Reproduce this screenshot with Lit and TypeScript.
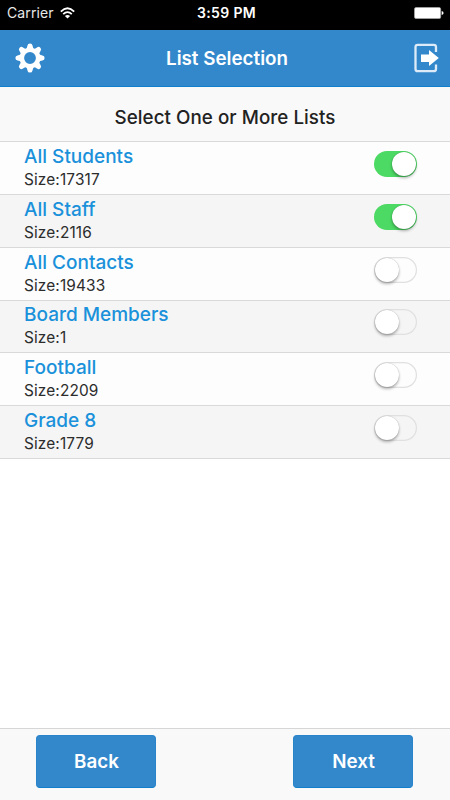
import { LitElement, html, css, svg } from "lit";
import { customElement, property, state } from "lit/decorators.js";
import { classMap } from "lit/directives/class-map.js";

interface Group {
  name: string;
  size: number;
  on: boolean;
}

@customElement("toggle-switch")
class ToggleSwitch extends LitElement {
  @property({ type: Boolean }) on = false;

  static styles = css`
    :host {
      display: block;
    }
    .track {
      box-sizing: border-box;
      display: flex;
      width: 43px;
      height: 26px;
      padding: 1px;
      border-radius: 13px;
      box-shadow: inset 0 0 0 1.2px #e0e0e0;
    }
    .track.on {
      justify-content: flex-end;
      background: #4cd964;
      box-shadow: none;
    }
    .knob {
      width: 24px;
      height: 24px;
      border-radius: 50%;
      background: #fff;
      box-shadow: 0 2px 3px rgba(0, 0, 0, 0.3), 0 0 1px rgba(0, 0, 0, 0.3);
    }
  `;

  render() {
    return html`<div class=${classMap({ track: true, on: this.on })}>
      <div class="knob"></div>
    </div>`;
  }
}

@customElement("app-root")
class AppRoot extends LitElement {
  @state() private groups: Group[] = [
    { name: "All Students", size: 17317, on: true },
    { name: "All Staff", size: 2116, on: true },
    { name: "All Contacts", size: 19433, on: false },
    { name: "Board Members", size: 1, on: false },
    { name: "Football", size: 2209, on: false },
    { name: "Grade 8", size: 1779, on: false },
  ];

  static styles = css`
    :host {
      display: flex;
      flex-direction: column;
      height: 800px;
      width: 450px;
      overflow: hidden;
      background: #fff;
      color: #222;
      font-family: Inter, "Liberation Sans", sans-serif;
    }
    svg {
      display: block;
    }
    .status {
      display: grid;
      grid-template-columns: 1fr auto 1fr;
      align-items: center;
      flex: none;
      height: 30px;
      box-sizing: border-box;
      padding: 0 6px 5px 7px;
      background: #000;
      color: #fff;
      font-size: 14px;
    }
    .carrier {
      display: flex;
      align-items: center;
      gap: 6px;
      color: #e8e8e8;
      letter-spacing: 0.1px;
    }
    .time {
      padding-left: 2px;
      font-weight: 600;
      letter-spacing: 0.35px;
    }
    .battery {
      justify-self: end;
    }
    .nav {
      display: grid;
      grid-template-columns: 1fr auto 1fr;
      align-items: center;
      flex: none;
      height: 57px;
      box-sizing: border-box;
      padding: 0 11px 0 15px;
      background: #3388cc;
      border-bottom: 1px solid #1180cc;
      color: #fff;
    }
    .logout {
      justify-self: end;
    }
    .title {
      font-size: 18.8px;
      font-weight: 600;
    }
    .heading {
      display: flex;
      align-items: center;
      justify-content: center;
      flex: none;
      box-sizing: border-box;
      height: 55.3px;
      padding-top: 6px;
      background: #f9f9f9;
      border-bottom: 1px solid #d9d9d9;
      font-size: 18.8px;
      font-weight: 500;
      letter-spacing: 0.05px;
    }
    .row {
      display: flex;
      justify-content: space-between;
      box-sizing: border-box;
      height: 52.8px;
      padding: 2.7px 33px 0 24px;
      border-bottom: 1px solid #d9d9d9;
      background: #fdfdfd;
    }
    .row:nth-child(even) {
      background: #f5f5f5;
    }
    .name {
      font-size: 19px;
      font-weight: 540;
      line-height: 23px;
      color: #1a91da;
    }
    .size {
      font-size: 15.4px;
      line-height: 23.2px;
      letter-spacing: 0.13px;
      color: #2c2c2c;
    }
    .switch {
      padding-top: 6px;
    }
    .footer {
      display: flex;
      justify-content: space-between;
      box-sizing: border-box;
      flex: none;
      height: 72px;
      margin-top: auto;
      padding: 6px 37px 0 36px;
      background: #f9f9f9;
      border-top: 1px solid #d6d6d6;
    }
    .button {
      box-sizing: border-box;
      width: 120px;
      height: 53px;
      padding: 0 0 0 1px;
      border: 1px solid #2a84ca;
      border-bottom-color: #1180cc;
      border-radius: 4px;
      background: #3388cc;
      color: #fff;
      font: 600 18.8px Inter, "Liberation Sans", sans-serif;
    }
  `;

  private gear() {
    const teeth = [0, 45, 90, 135, 180, 225, 270, 315];
    return html`<svg width="30" height="30" viewBox="-15 -15 30 30" fill="#fff">
      <circle r="8" fill="none" stroke="#fff" stroke-width="4.2" />
      ${teeth.map(
        (a) => svg`<path transform="rotate(${a})"
          d="M-4.4 -8.8 Q-2.8 -9.8 -2.5 -12.4 Q-2.2 -14.6 0 -14.6 Q2.2 -14.6 2.5 -12.4 Q2.8 -9.8 4.4 -8.8 Z" />`
      )}
    </svg>`;
  }

  render() {
    return html`
      <div class="status">
        <div class="carrier">
          <span>Carrier</span>
          <svg width="15" height="12" viewBox="0 0 15 12" fill="none" stroke="#fff" stroke-width="1.8">
            <path d="M0.8 4.6 Q7.5 -2 14.2 4.6" />
            <path d="M3.2 7.2 Q7.5 3 11.8 7.2" />
            <path d="M7.5 11.6 L4.9 9 Q7.5 6.8 10.1 9 Z" fill="#fff" stroke="none" />
          </svg>
        </div>
        <div class="time">3:59 PM</div>
        <svg class="battery" width="30" height="12" viewBox="0 0 30 12" fill="#fff">
          <rect x="0.5" y="0.5" width="26.2" height="11" rx="1.5" stroke="#aaa" stroke-width="0.7" />
          <path d="M27.7 4 Q29.6 4.4 29.6 6 T27.7 8 Z" />
        </svg>
      </div>
      <div class="nav">
        ${this.gear()}
        <div class="title">List Selection</div>
        <svg class="logout" width="25" height="30" viewBox="0 0 25 30">
          <path
            d="M22 9 V4 Q22 1.8 19.8 1.8 H3.7 Q1.5 1.8 1.5 4 V26 Q1.5 28.2 3.7 28.2 H19.8 Q22 28.2 22 26 V21.5"
            fill="none" stroke="#dcebf7" stroke-width="2.3" />
          <path d="M7 11.5 H15 V7 L24.8 15.1 L15 23 V19 H7 Z" fill="#fff" />
        </svg>
      </div>
      <div class="heading">Select One or More Lists</div>
      <div class="list">
        ${this.groups.map(
          (g) => html`<div class="row">
            <div>
              <div class="name">${g.name}</div>
              <div class="size">Size:${g.size}</div>
            </div>
            <toggle-switch class="switch" ?on=${g.on}></toggle-switch>
          </div>`
        )}
      </div>
      <div class="footer">
        <button class="button">Back</button>
        <button class="button">Next</button>
      </div>
    `;
  }
}
